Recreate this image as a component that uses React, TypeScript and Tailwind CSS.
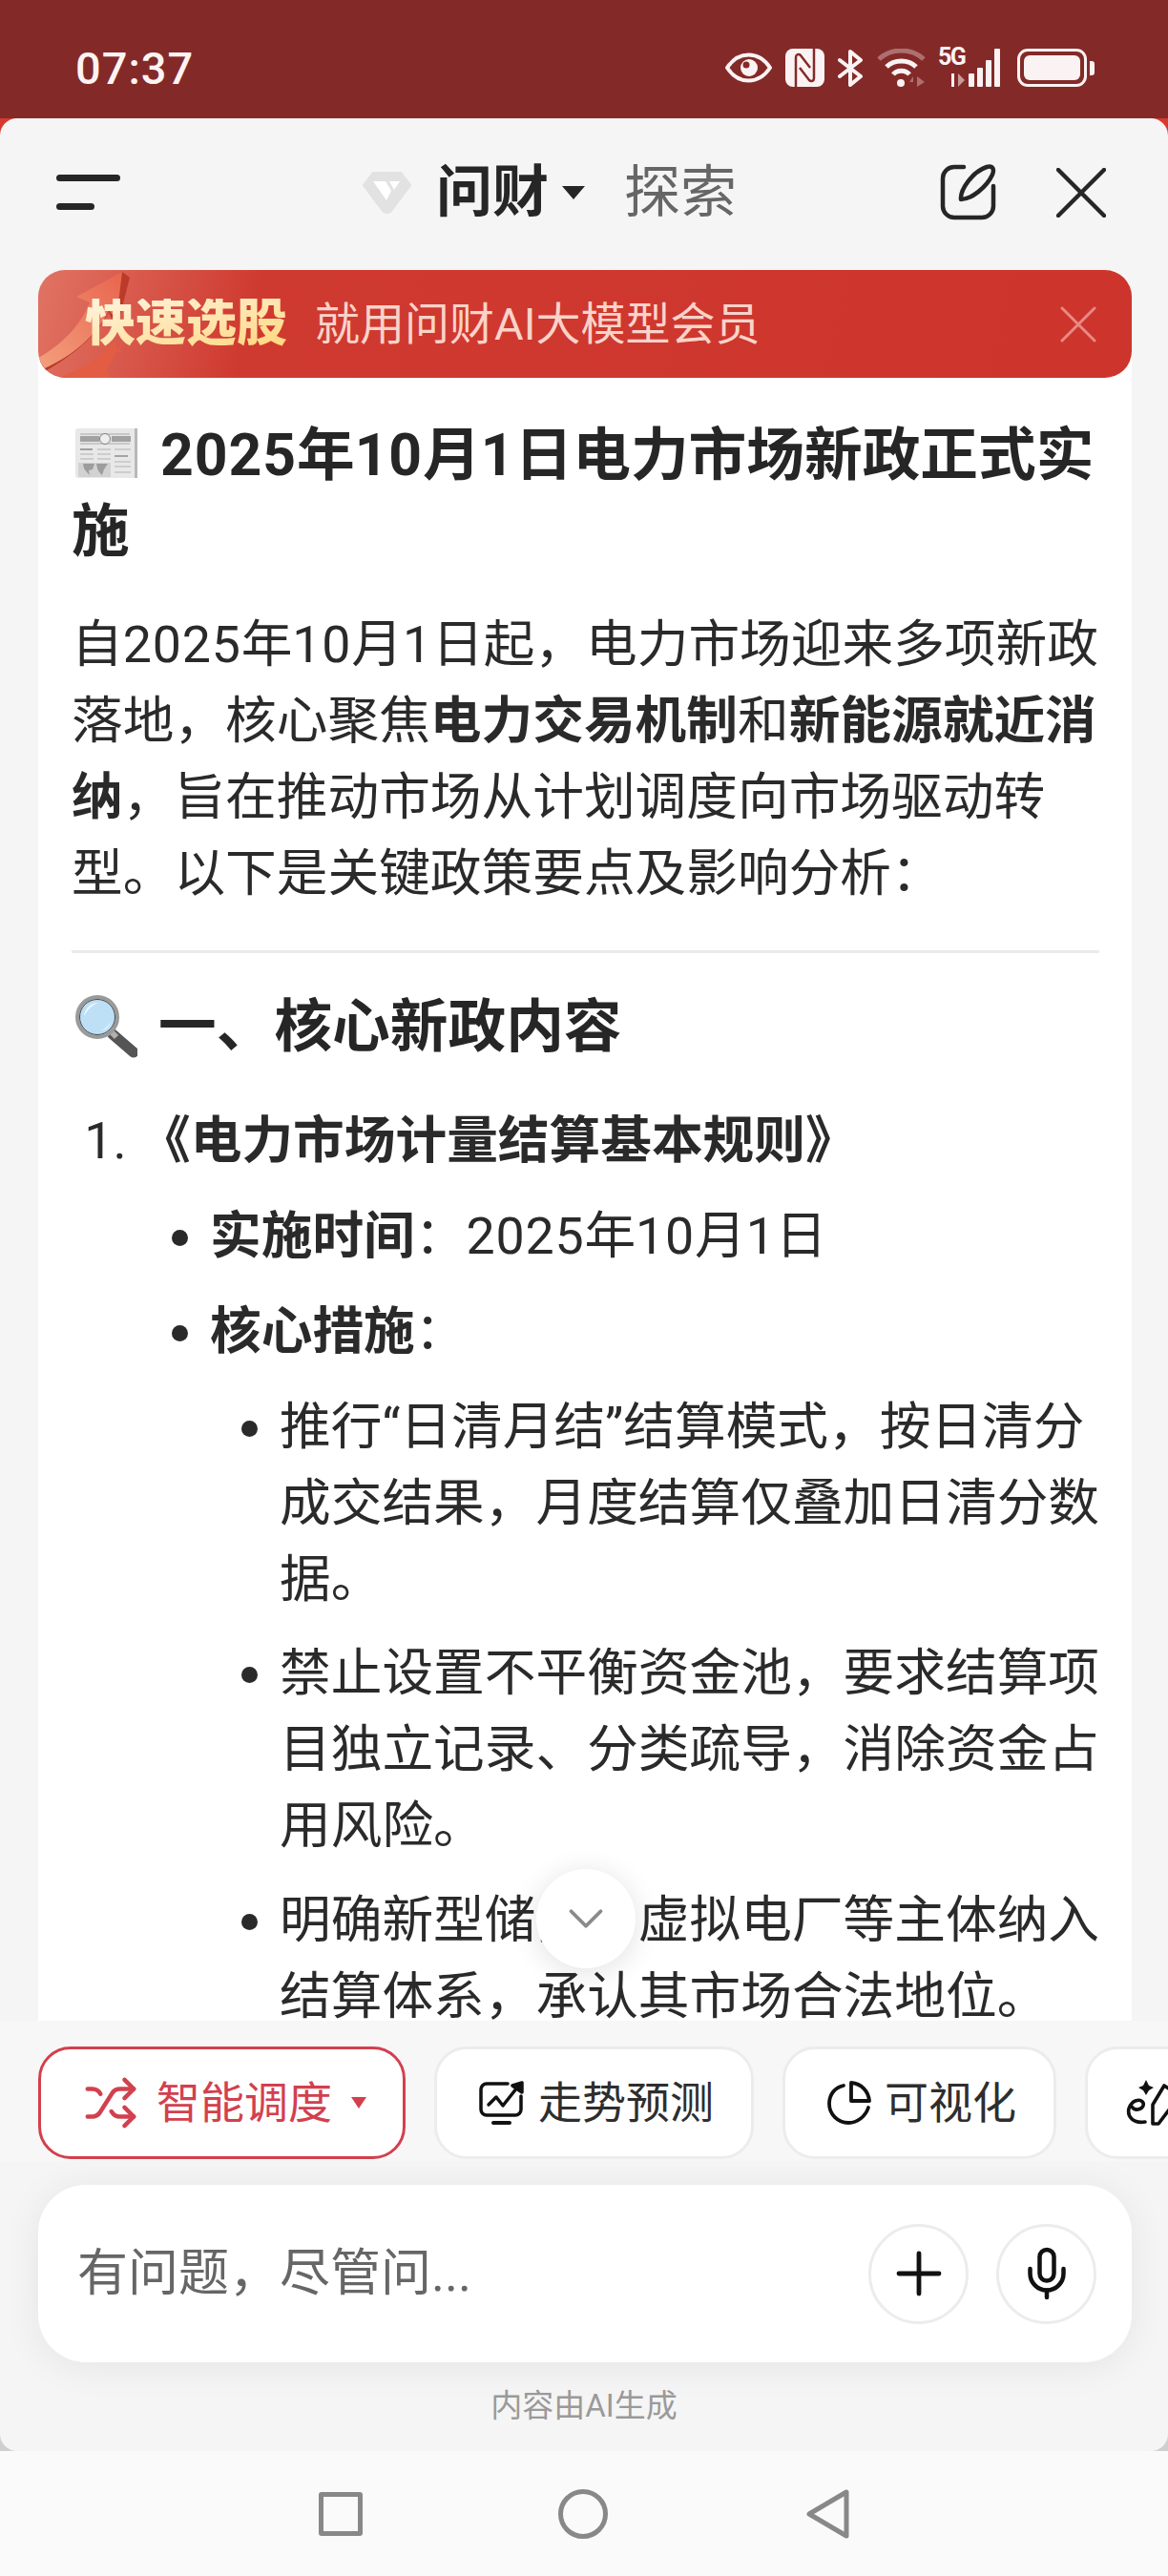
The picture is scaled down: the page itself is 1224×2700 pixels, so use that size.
import { ChevronDown, Mic, Plus, Shuffle } from "lucide-react";

const StatusIcons = () => (
  <div className="flex items-center text-[#fbf3f3]">
    {/* eye */}
    <svg width="49" height="32" viewBox="0 0 49 32">
      <path d="M2 16C8 7 15 2.500 24.500 2.500S41 7 47 16C41 25 34 29.500 24.500 29.500S8 25 2 16Z" fill="none" stroke="currentColor" strokeWidth="4" />
      <circle cx="25" cy="16" r="9" fill="currentColor" />
      <circle cx="22" cy="13" r="3.500" fill="#832a28" />
    </svg>
    {/* nfc */}
    <svg width="41" height="40" viewBox="0 0 41 40" className="ml-[14px]">
      <rect x="0" y="0" width="41" height="40" rx="8" fill="currentColor" />
      <path d="M11 40V9C11 6 14 5 16 7L26 20M30 0V31C30 34 27 35 25 33L15 20" fill="none" stroke="#832a28" strokeWidth="2.500" />
    </svg>
    {/* bluetooth */}
    <svg width="27" height="39" viewBox="0 0 27 39" className="ml-[14px]">
      <path d="M2 11L24 28L13 37V2L24 11L2 28" fill="none" stroke="currentColor" strokeWidth="4" strokeLinejoin="round" strokeLinecap="round" />
    </svg>
    {/* wifi */}
    <svg width="51" height="40" viewBox="0 0 51 40" className="ml-[14px]">
      <path d="M2 11C15 -1 36 -1 49 11" fill="none" stroke="currentColor" strokeOpacity="0.35" strokeWidth="5" />
      <path d="M10 19C18 11 33 11 41 19" fill="none" stroke="currentColor" strokeWidth="5" />
      <path d="M17 27C21 22 30 22 34 27" fill="none" stroke="currentColor" strokeWidth="5" />
      <circle cx="25" cy="36" r="4" fill="currentColor" />
      <path d="M38 40V29L34 35H38ZM42 29V40L50 35Z" fill="currentColor" fillOpacity="0.35" />
    </svg>
    {/* 5g + signal */}
    <div className="relative ml-[13px] h-[40px] w-[65px]">
      <span className="absolute left-0 top-[-4px] text-[25px] font-bold leading-[26px] tracking-[-1.500px]">5G</span>
      <div className="absolute bottom-0 right-0 flex items-end gap-[3px]">
        <span className="mr-[1px] h-[14px] w-[3px] bg-[#fbf3f3]" />
        <span className="mr-[1px] h-[14px] w-0 border-y-[7px] border-l-[7px] border-y-transparent border-l-[#c99a98]" />
        <span className="h-[14px] w-[6px] rounded-[1px] bg-[#fbf3f3]" />
        <span className="h-[20px] w-[6px] rounded-[1px] bg-[#fbf3f3]" />
        <span className="h-[28px] w-[6px] rounded-[1px] bg-[#fbf3f3]" />
        <span className="h-[40px] w-[6px] rounded-[1px] bg-[#fbf3f3]" />
      </div>
    </div>
    {/* battery */}
    <div className="ml-[18px] flex items-center gap-[3px]">
      <div className="flex h-[40px] w-[73px] items-center rounded-[11px] border-[3px] border-[#fbf3f3] p-[4px]">
        <div className="h-full w-full rounded-[6px] bg-[#fbf3f3]" />
      </div>
      <div className="h-[15px] w-[5px] rounded-r-[3px] bg-[#fbf3f3]" />
    </div>
  </div>
);

const Newspaper = () => (
  <svg width="65" height="52" viewBox="0 0 65 52" className="ml-[4px] mr-[24px] inline-block align-[-3px]">
    <rect x="0" y="0" width="65" height="52" rx="3" fill="#e8e8e8" />
    <path d="M62 0h3v52h-3z" fill="#b8b8b8" />
    <path d="M5 6h52M5 16h52" stroke="#a8a8a8" strokeWidth="1" />
    <rect x="5" y="8" width="20" height="6" fill="#a2a2a2" />
    <rect x="38" y="8" width="20" height="6" fill="#a2a2a2" />
    <circle cx="31" cy="11" r="5.500" fill="#eee" stroke="#808080" strokeWidth="1" />
    <path d="M5 22h13" stroke="#a0a0a0" strokeWidth="2" />
    <path d="M5 27h14M5 32h14M23 27h14M23 22h14M23 32h14M41 22h17" stroke="#c4c4c4" strokeWidth="1.500" />
    <path d="M41 29h14" stroke="#a4a4a4" strokeWidth="2" />
    <path d="M41 35h17M41 40h17M41 46h17" stroke="#c4c4c4" strokeWidth="1.500" />
    <path d="M3 36h34v15H5a2 2 0 0 1-2-2Z" fill="#d2d2d2" />
    <path d="M8 37h12l-2 6-4 1 1 5-3-3-3-4ZM22 37h12l-4 6-2 6-3-3-2-4Z" fill="#9d9d9d" />
  </svg>
);

const Magnifier = () => (
  <svg width="66" height="66" viewBox="0 0 66 66" className="ml-[3px] mr-[22px] inline-block align-[-12px]">
    <path d="M40 41L62 60" stroke="#555" strokeWidth="11" strokeLinecap="round" />
    <path d="M38 38L44 44" stroke="#b0b0b0" strokeWidth="6" />
    <circle cx="24" cy="23" r="21" fill="#bde0f6" stroke="#9a9a9a" strokeWidth="4" />
    <circle cx="24" cy="23" r="18.500" fill="none" stroke="#4a4a4a" strokeWidth="1" />
    <path d="M10 22C11 14 17 8 25 8C19 10 14 15 10 22Z" fill="#eef8fe" />
    <path d="M27 37C32 36 36 32 38 28C37 33 33 37 27 37Z" fill="#eef8fe" />
  </svg>
);

const ChartIcon = () => (
  <svg width="48" height="46" viewBox="0 0 48 46" fill="none" stroke="#111" strokeWidth="3.500" strokeLinecap="round" strokeLinejoin="round">
    <path d="M30 3H8a6 6 0 0 0-6 6v21a6 6 0 0 0 6 6h30a6 6 0 0 0 6-6V16" />
    <path d="M10 25L18 17L25 26L40 7" />
    <path d="M35 5L45 2L45 12Z" fill="#111" />
    <path d="M15 44H32" strokeWidth="4" />
  </svg>
);

const PieIcon = () => (
  <svg width="46" height="46" viewBox="0 0 46 46" fill="none" stroke="#111" strokeWidth="3.800" strokeLinecap="round" strokeLinejoin="round">
    <path d="M17 5C8 7 2 14 2 24C2 35 11 44 22 44C32 44 40 37 43 28" />
    <path d="M25 2C36 3 43 11 44 21H25Z" />
  </svg>
);

const PenIcon = () => (
  <svg width="46" height="48" viewBox="0 0 46 48" fill="none" stroke="#111" strokeWidth="3.600" strokeLinecap="round" strokeLinejoin="round">
    <path d="M21 0L24 6L29 8L24 11L21 16L18 11L13 8L18 6Z" fill="#111" stroke="none" />
    <path d="M6 28C10 34 20 30 18 24C15 19 6 21 3 30C1 39 8 46 20 44" />
    <path d="M28 46V26L40 6L46 10V30L34 46Z" />
  </svg>
);

const CloseIcon = ({ size, stroke, className }: { size: number; stroke: number; className: string }) => (
  <svg width={size} height={size} viewBox={`0 0 ${size} ${size}`} fill="none" stroke="currentColor" strokeWidth={stroke} strokeLinecap="round" className={className}>
    <path d={`M2 2L${size - 2} ${size - 2}M${size - 2} 2L2 ${size - 2}`} />
  </svg>
);

// digits in the answer text run a touch wider than the CJK around them
const Num = ({ children }: { children: React.ReactNode }) => <span className="tracking-[0.015em]">{children}</span>;

const Chip = ({ icon, label, className }: { icon: React.ReactNode; label?: string; className: string }) => (
  <div className={`flex h-[118px] shrink-0 items-center rounded-[34px] border-[3px] border-[#ececec] bg-white ${className}`}>
    {icon}
    {label && <span className="ml-[14px] whitespace-nowrap text-[46px] leading-none text-[#2e2e2e]">{label}</span>}
  </div>
);

export default function App() {
  return (
    <div className="flex h-[2700px] w-[1224px] flex-col overflow-hidden bg-[linear-gradient(#d6392f_200px,#cfcfcf_200px)] font-['Roboto','Noto_Sans_CJK_SC',sans-serif] text-[#262626]">
      {/* status bar */}
      <div className="flex h-[124px] shrink-0 items-center justify-between bg-[#832a28] pl-[79px] pr-[77px] pt-[18px]">
        <span className="text-[47px] font-medium leading-none tracking-[1px] text-[#fdf3f3]">07:37</span>
        <StatusIcons />
      </div>

      <div className="flex min-h-0 flex-1 flex-col rounded-[18px] bg-[#f5f5f5]">
        {/* top bar */}
        <div className="flex h-[159px] shrink-0 items-center pl-[59px] pr-[65px] pb-[4px]">
          <div className="flex w-[67px] flex-col items-start gap-[23px]">
            <span className="h-[7px] w-[67px] rounded-full bg-[#262626]" />
            <span className="h-[7px] w-[40px] rounded-full bg-[#262626]" />
          </div>
          <svg width="51" height="44" viewBox="0 0 51 44" className="ml-[254px]">
            <path d="M11 0H40L51 14L30 42C28 44 23 44 21 42L0 14Z" fill="#e2e2e2" stroke="#e2e2e2" strokeLinejoin="round" />
            <path d="M11 10H24L30 20L25 30ZM28 10H39L33 19Z" fill="#fff" />
          </svg>
          <span className="ml-[26px] text-[59px] font-bold leading-none">问财</span>
          <span className="ml-[14px] h-0 w-0 border-x-[12px] border-t-[14px] border-x-transparent border-t-[#262626]" />
          <span className="ml-[41px] text-[59px] leading-none text-[#666]">探索</span>
          <svg width="59" height="59" viewBox="0 0 59 59" fill="none" stroke="#262626" strokeWidth="4.500" strokeLinecap="round" strokeLinejoin="round" className="ml-auto">
            <path d="M25 3H15A12 12 0 0 0 3 15V44A12 12 0 0 0 15 56H44A12 12 0 0 0 56 44V23" />
            <path d="M22 37C21 27 34 8 49 3C56 1 57 6 55 11C49 24 33 37 22 37Z" />
          </svg>
          <CloseIcon size={52} stroke={4.500} className="ml-[63px] text-[#262626]" />
        </div>

        {/* promo banner */}
        <div className="relative z-10 ml-[40px] mr-[38px] -mb-[30px] flex h-[113px] shrink-0 items-center overflow-hidden rounded-[28px] bg-[linear-gradient(105deg,#e07464_0%,#cf3a30_20%,#cd342c_100%)] pl-[49px] pr-[37px]">
          <svg width="130" height="113" viewBox="0 0 130 113" className="absolute left-0 top-0">
            <defs>
              <linearGradient id="arrowFill" x1="0" y1="1" x2="1" y2="0">
                <stop offset="0" stopColor="#f3a07e" />
                <stop offset="1" stopColor="#e9644e" />
              </linearGradient>
            </defs>
            <path d="M88 2L96 8L82 62L74 44C62 68 35 92 0 110V96C35 88 62 68 74 42Z" fill="#bb3a28" />
            <path d="M88 2L40 28L54 34C44 60 22 80 0 92V106C35 92 62 68 74 42L82 52Z" fill="url(#arrowFill)" />
            <path d="M20 113C50 104 68 90 80 74L84 88L92 68L72 104L76 113Z" fill="#e35c44" />
          </svg>
          <span className="relative bg-linear-to-br from-[#fff4e0] to-[#ffd67a] bg-clip-text text-[53px] font-black leading-none text-transparent">快速选股</span>
          <span className="relative ml-[29px] text-[47px] leading-none text-[#f9d3c9]">就用问财AI大模型会员</span>
          <CloseIcon size={38} stroke={3} className="ml-auto text-[#e88a85]" />
        </div>

        {/* answer body */}
        <div className="relative ml-[40px] mr-[38px] h-[1752px] shrink-0 overflow-hidden bg-white pl-[35px] pr-[28px] pt-[72px]">
          <h1 className="text-[60.700px] font-bold leading-[80px]">
            <Newspaper />
            <Num>2025</Num>年<Num>10</Num>月<Num>1</Num>日电力市场新政正式实施
          </h1>
          <p className="mt-[38px] text-[53.700px] leading-[80px] text-[#2a2a2a]">
            自<Num>2025</Num>年<Num>10</Num>月<Num>1</Num>日起，电力市场迎来多项新政落地，核心聚焦<strong className="font-bold">电力交易机制</strong>和<strong className="font-bold">新能源就近消纳</strong>，旨在推动市场从计划调度向市场驱动转型。以下是关键政策要点及影响分析：
          </p>
          <hr className="mr-[6px] mt-[40px] border-t-[3px] border-[#ebebeb]" />
          <h2 className="mt-[38px] text-[60.700px] font-bold leading-[80px]">
            <Magnifier />
            一、核心新政内容
          </h2>
          <ol className="mt-[39px] list-decimal pl-[71px] text-[53.700px] leading-[80px] text-[#2a2a2a]">
            <li>
              <strong className="font-bold">《电力市场计量结算基本规则》</strong>
              <ul className="list-disc pl-[74px]">
                <li className="mt-[20px]">
                  <strong className="font-bold">实施时间</strong>：<Num>2025</Num>年<Num>10</Num>月<Num>1</Num>日
                </li>
                <li className="mt-[20px]">
                  <strong className="font-bold">核心措施</strong>：
                  <ul className="list-disc pl-[73px]">
                    <li className="mt-[20px]">推行“日清月结”结算模式，按日清分成交结果，月度结算仅叠加日清分数据。</li>
                    <li className="mt-[18px]">禁止设置不平衡资金池，要求结算项目独立记录、分类疏导，消除资金占用风险。</li>
                    <li className="mt-[19px]">明确新型储能、虚拟电厂等主体纳入结算体系，承认其市场合法地位。</li>
                  </ul>
                </li>
              </ul>
            </li>
          </ol>
          {/* scroll to latest */}
          <button className="absolute left-[522px] top-[1593px] flex h-[104px] w-[104px] items-center justify-center rounded-full bg-white shadow-[0_4px_30px_rgba(0,0,0,0.12)]">
            <ChevronDown size={62} strokeWidth={1.500} className="text-[#8a8a8a]" />
          </button>
        </div>

        {/* quick action chips */}
        <div className="flex h-[147px] shrink-0 items-start gap-[30px] overflow-hidden bg-[#f7f7f7] pl-[40px] pt-[27px]">
          <div className="flex h-[118px] w-[385px] shrink-0 items-center rounded-[34px] border-[3px] border-[#d2404e] bg-white pl-[44px]">
            <Shuffle size={58} strokeWidth={1.900} className="text-[#d2404e]" />
            <span className="ml-[19px] text-[46px] leading-none text-[#d2404e]">智能调度</span>
            <span className="ml-[20px] h-0 w-0 border-x-[8px] border-t-[12px] border-x-transparent border-t-[#d2404e]" />
          </div>
          <Chip icon={<ChartIcon />} label="走势预测" className="w-[335px] pl-[44px]" />
          <Chip icon={<PieIcon />} label="可视化" className="w-[287px] pl-[44px]" />
          <Chip icon={<PenIcon />} className="w-[286px] pl-[40px]" />
        </div>

        {/* input box */}
        <div className="relative shrink-0 pl-[40px] pr-[38px] pt-[25px] pb-[26px]">
          <div className="flex h-[186px] items-center rounded-[50px] bg-white pl-[41px] pr-[37px] shadow-[0_4px_40px_rgba(0,0,0,0.07)]">
            <span className="text-[53px] leading-none text-[#666]">有问题，尽管问...</span>
            <div className="ml-auto flex size-[105px] items-center justify-center rounded-full border-[3px] border-[#ececec]">
              <Plus size={72} strokeWidth={1.600} className="text-[#111]" />
            </div>
            <div className="ml-[29px] flex size-[105px] items-center justify-center rounded-full border-[3px] border-[#ececec]">
              <Mic size={60} strokeWidth={1.800} className="text-[#111]" />
            </div>
          </div>
        </div>
        <p className="text-center text-[33px] leading-[40px] text-[#9a9a9a]">内容由AI生成</p>
      </div>

      {/* android nav bar */}
      <div className="flex h-[131px] shrink-0 items-center bg-[#fafafa]">
        <span className="ml-[334px] size-[46px] rounded-[3px] border-[5px] border-[#888]" />
        <span className="ml-[205px] size-[52px] rounded-full border-[5px] border-[#888]" />
        <svg width="48" height="54" viewBox="0 0 48 54" fill="none" className="ml-[207px]">
          <path d="M43 4V50L4 27Z" stroke="#888" strokeWidth="5" strokeLinejoin="round" />
        </svg>
      </div>
    </div>
  );
}
